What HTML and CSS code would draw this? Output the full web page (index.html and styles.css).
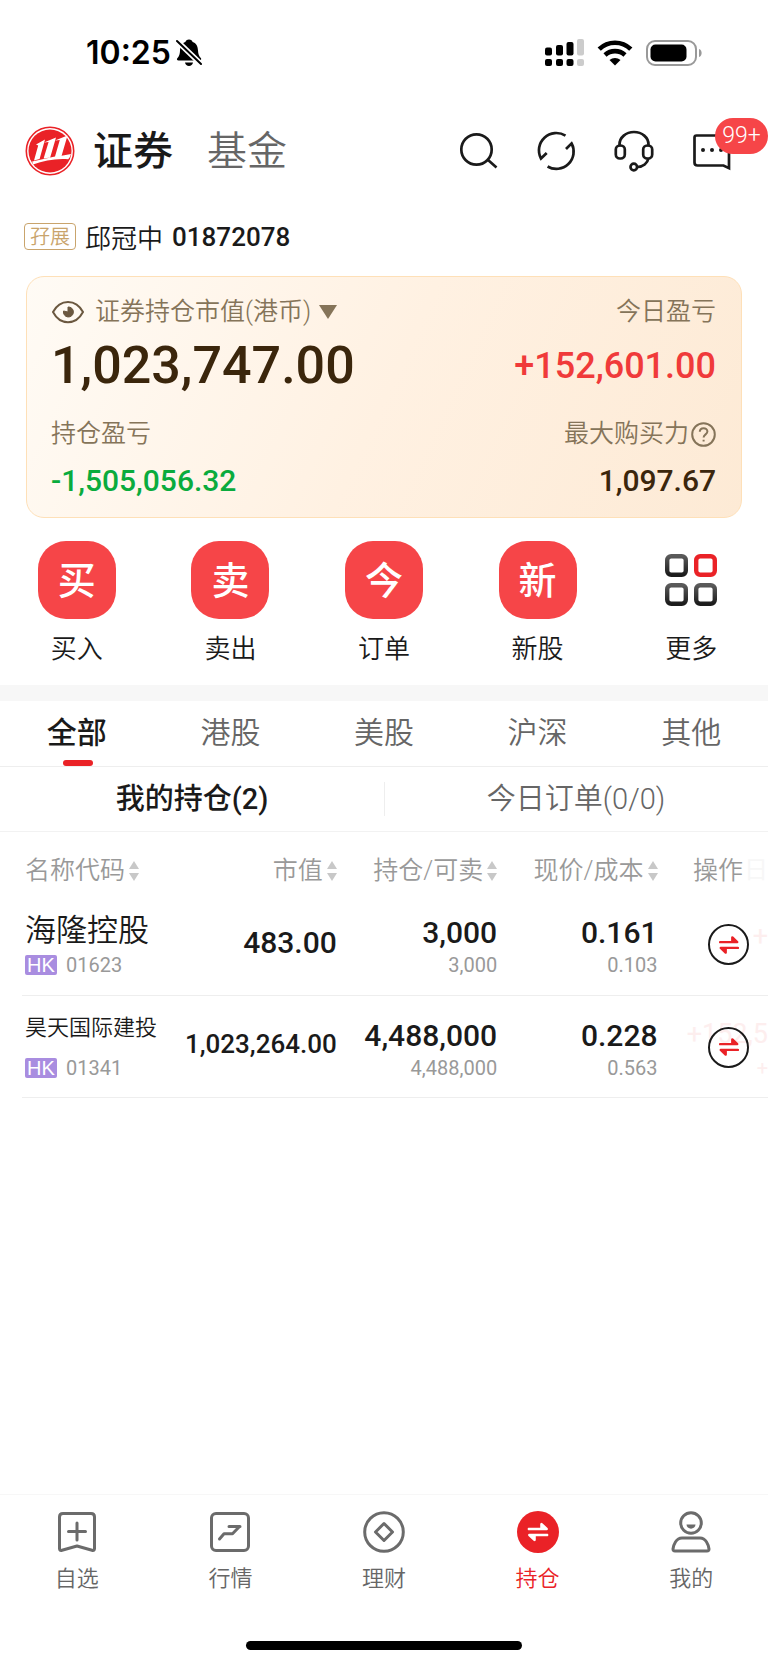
FILE: index.html
```html
<!DOCTYPE html>
<html lang="zh-CN">
<head>
<meta charset="utf-8">
<meta name="viewport" content="width=device-width, initial-scale=1">
<title>持仓</title>
<link rel="stylesheet" href="styles.css">
</head>
<body>
<svg class="defs" width="0" height="0" aria-hidden="true">
  <defs>
    <symbol id="swap" viewBox="0 0 18 18">
      <path d="M1 6.400H16.400L12 2.200V6.400M17 11.600H1.600L6 15.800V11.600" fill="none" stroke="currentColor" stroke-width="2.200" stroke-linecap="round" stroke-linejoin="round"/>
      <path d="M12 2.200V6.400H16.400ZM6 15.800V11.600H1.600Z" fill="currentColor" stroke="none"/>
    </symbol>
    <symbol id="sort" viewBox="0 0 10 20">
      <path d="M5 0L10 8H0ZM5 20L10 12H0Z" fill="currentColor"/>
    </symbol>
  </defs>
</svg>

<div class="status">
  <div class="status-left">
    <span class="time">10:25</span>
    <svg width="26" height="28" viewBox="0 0 26 28" aria-hidden="true">
      <path d="M13 0.500C15.200 0.500 16.200 1.800 16.600 2.900C20.600 4.300 21.800 7.500 22 11.500C22.200 15.500 23 17 25 19.200C25.500 20.300 25 21.500 23.500 21.500H2.500C1 21.500 0.500 20.300 1.300 19.200C3.300 17 3.800 15.500 4 11.500C4.200 7.500 5.600 4.300 9.400 2.900C9.800 1.800 10.800 0.500 13 0.500ZM9 23.500H17C16.600 25.800 15 27 13 27C11 27 9.400 25.800 9 23.500Z"/>
      <path d="M1 2L26 26" stroke="#fff" stroke-width="5.500"/>
      <path d="M1 2L25 25" stroke="#000" stroke-width="2" stroke-linecap="round"/>
    </svg>
  </div>
  <div class="status-right">
    <svg width="39" height="28" viewBox="0 0 39 28" aria-hidden="true">
      <rect x="0" y="8.500" width="7" height="8" rx="2"/><rect x="11" y="6" width="7" height="10.500" rx="2"/><rect x="21.500" y="3" width="7" height="13.500" rx="2"/><rect x="32" y="0" width="7" height="16.500" rx="2" fill="#ccc"/>
      <rect x="0" y="20" width="7" height="7" rx="2"/><rect x="11" y="20" width="7" height="7" rx="2"/><rect x="21.500" y="20" width="7" height="7" rx="2"/><rect x="32" y="20" width="7" height="7" rx="2" fill="#ccc"/>
    </svg>
    <svg class="wifi" width="36" height="26" viewBox="0 0 36 26" aria-hidden="true">
      <path d="M2.200 9.200C11 0.600 25 0.600 33.800 9.200M8 15C13.800 9.800 22.200 9.800 28 15" fill="none" stroke="#000" stroke-width="4.600"/>
      <path d="M18 25.500L12.500 20C15.600 17.300 20.400 17.300 23.500 20Z"/>
    </svg>
    <svg width="57" height="26" viewBox="0 0 57 26" aria-hidden="true">
      <rect x="1" y="1" width="49" height="24" rx="8" fill="none" stroke="#999" stroke-width="2"/>
      <rect x="4.500" y="4.500" width="36" height="17" rx="5"/>
      <path d="M53 9C56.500 10 56.500 16 53 17Z" fill="#999"/>
    </svg>
  </div>
</div>

<header class="header">
  <svg class="logo" width="50" height="50" viewBox="0 0 50 50" role="img" aria-label="招商证券">
    <circle cx="25" cy="25" r="23.700" fill="#fff" stroke="#ea2227" stroke-width="1.600"/>
    <circle cx="25" cy="25" r="21.500" fill="#ea2227"/>
    <path d="M11 18.500L20 13.500L14.600 33L9 34.500L13.200 19.500ZM19 16.500L31 11.500L25.200 31.500L18.600 32.500L23.600 16ZM30 14.500L42.500 9.500L36.600 29.800L46 28C44.800 31.500 44 32.500 43.200 33.200C31 32.200 19 34.500 8 38.500L7.200 35.500L30 30.500L34.800 14Z" fill="#fff"/>
  </svg>
  <nav class="modes">
    <button class="mode mode-on">证券</button>
    <button class="mode">基金</button>
  </nav>
  <div class="tools">
    <button class="tool" aria-label="搜索"><svg viewBox="0 0 42 42"><circle cx="19.500" cy="19.500" r="15.200"/><path d="M30.500 29.500L39.500 37.500"/></svg></button>
    <button class="tool" aria-label="刷新"><svg viewBox="0 0 42 42"><path d="M30.500 5.700A17.300 17.300 0 0 0 6 28.500L11.700 23M12.600 36.500A17.300 17.300 0 0 0 36.600 13.400L31 19"/></svg></button>
    <button class="tool" aria-label="客服"><svg viewBox="0 0 42 42"><path d="M6.500 16.500V14.500C6.500 7.500 13 2 21 2S35.500 7.500 35.500 14.500V16.500M35.500 28C34.500 33.500 30 37 24.500 37"/><rect x="2.800" y="15.500" width="9" height="13" rx="4"/><rect x="30.200" y="15.500" width="9" height="13" rx="4"/><circle cx="20.800" cy="37" r="3.300"/></svg></button>
    <button class="tool" aria-label="消息"><svg viewBox="0 0 42 42"><path d="M5.500 5.500H38V38.200L32.500 35.500H6.500Q3.500 35.500 3.500 32.500V7.500Q3.500 5.500 5.500 5.500Z"/><g fill="#1a1a1a" stroke="none"><circle cx="12" cy="20" r="2"/><circle cx="21" cy="20" r="2"/><circle cx="30" cy="20" r="2"/></g></svg><span class="badge">99+</span></button>
  </div>
</header>

<main>
  <div class="account"><span class="tag">孖展</span><span class="owner">邱冠中</span><span class="acct-no">01872078</span></div>

  <section class="card">
    <div class="card-row labels">
      <div class="card-title">
        <button class="eye" aria-label="隐藏金额"><svg width="34" height="24" viewBox="0 0 34 24"><path d="M2 12C9 -1.500 25 -1.500 32 12C25 25.500 9 25.500 2 12Z" fill="none" stroke="#6b5840" stroke-width="2"/><path d="M17 7V12L12.500 11A5 5 0 1 0 17 7Z" fill="#6b5840" stroke="#6b5840"/></svg></button>
        <button class="currency">证券持仓市值(港币)<svg width="20" height="14" viewBox="0 0 20 14"><path d="M1 0H19L10 14Z" fill="#857459"/></svg></button>
      </div>
      <span>今日盈亏</span>
    </div>
    <div class="card-row totals"><strong class="total">1,023,747.00</strong><span class="today">+152,601.00</span></div>
    <div class="card-row labels"><span>持仓盈亏</span>
      <button class="help">最大购买力<svg width="25" height="25" viewBox="0 0 25 25"><circle cx="12.500" cy="12.500" r="11.300"/><path d="M8.800 9.800C8.800 5 16.400 5 16.400 9.600C16.400 12.400 12.600 12.400 12.600 15.600M12.600 17.800V19.600"/></svg></button>
    </div>
    <div class="card-row amounts"><span class="loss">-1,505,056.32</span><span>1,097.67</span></div>
  </section>

  <nav class="actions">
    <button class="action"><span class="tile">买</span>买入</button>
    <button class="action"><span class="tile">卖</span>卖出</button>
    <button class="action"><span class="tile">今</span>订单</button>
    <button class="action"><span class="tile">新</span>新股</button>
    <button class="action"><svg width="78" height="78" viewBox="0 0 78 78" aria-hidden="true">
      <defs><linearGradient id="ink" x1="0" y1="0" x2="0" y2="1"><stop offset="0" stop-color="#5a5a5a"/><stop offset="1" stop-color="#1c1c1c"/></linearGradient></defs>
      <g fill="none" stroke="url(#ink)" stroke-width="4.400"><rect x="15.200" y="15.200" width="18.600" height="18.600" rx="4"/><rect x="44.200" y="15.200" width="18.600" height="18.600" rx="4" stroke="#ea2227"/><rect x="15.200" y="44.200" width="18.600" height="18.600" rx="4"/><rect x="44.200" y="44.200" width="18.600" height="18.600" rx="4"/></g>
    </svg>更多</button>
  </nav>

  <nav class="markets">
    <button class="market market-on">全部</button><button class="market">港股</button><button class="market">美股</button><button class="market">沪深</button><button class="market">其他</button>
  </nav>
  <div class="views">
    <button class="view view-on">我的持仓(2)</button>
    <button class="view">今日订单(0/0)</button>
  </div>

  <table class="holdings">
    <colgroup><col class="c-name"><col class="c-value"><col class="c-qty"><col class="c-price"><col></colgroup>
    <thead>
      <tr>
        <th><button class="sort">名称代码<svg><use href="#sort"/></svg></button></th>
        <th><button class="sort">市值<svg><use href="#sort"/></svg></button></th>
        <th><button class="sort">持仓/可卖<svg><use href="#sort"/></svg></button></th>
        <th><button class="sort">现价/成本<svg><use href="#sort"/></svg></button></th>
        <th class="op">操作<span class="under under-head">日</span></th>
      </tr>
    </thead>
    <tbody>
      <tr>
        <td><div class="name">海隆控股</div><div class="code"><span class="hk">HK</span>01623</div></td>
        <td class="value">483.00</td>
        <td><div class="num">3,000</div><div class="sub">3,000</div></td>
        <td><div class="num">0.161</div><div class="sub">0.103</div></td>
        <td class="op"><span class="under under-far">+</span><button class="trade" aria-label="交易"><svg width="20" height="20"><use href="#swap"/></svg></button></td>
      </tr>
      <tr>
        <td><div class="name name-long">昊天国际建投</div><div class="code"><span class="hk">HK</span>01341</div></td>
        <td class="value value-long">1,023,264.00</td>
        <td><div class="num">4,488,000</div><div class="sub">4,488,000</div></td>
        <td><div class="num">0.228</div><div class="sub">0.563</div></td>
        <td class="op"><span class="under under-gain">+152,5</span><span class="under under-rate">+</span><button class="trade" aria-label="交易"><svg width="20" height="20"><use href="#swap"/></svg></button></td>
      </tr>
    </tbody>
  </table>
</main>

<footer class="dock">
  <nav class="dock-nav">
    <a class="dock-item" href="#watch"><svg viewBox="0 0 42 42"><path d="M7 2.500H35Q38.500 2.500 38.500 6V37.500Q38.500 40 36 39.200L21 35L6 39.200Q3.500 40 3.500 37.500V6Q3.500 2.500 7 2.500ZM21 12V29M12.500 20.500H29.500"/></svg>自选</a>
    <a class="dock-item" href="#quotes"><svg viewBox="0 0 42 42"><rect x="2.500" y="2.500" width="37" height="37" rx="4.500"/><path d="M10.500 28L15 22.800H23.500L30.500 15.500M20 15.500H31"/></svg>行情</a>
    <a class="dock-item" href="#wealth"><svg viewBox="0 0 42 42"><circle cx="21" cy="21" r="19.300"/><path d="M21 12.500L29.500 21L21 29.500L12.500 21Z"/></svg>理财</a>
    <a class="dock-item dock-on" href="#holdings"><svg viewBox="0 0 42 42"><circle cx="21" cy="21" r="21" fill="#ea2227" stroke="none"/><use href="#swap" x="10.500" y="10.500" width="21" height="21" color="#fff"/></svg>持仓</a>
    <a class="dock-item" href="#me"><svg viewBox="0 0 42 42"><circle cx="21" cy="12" r="10.300"/><path d="M12 27H30C36 27 38.500 34 39 38Q39.200 40 37 40H5Q2.800 40 3 38C3.500 34 6 27 12 27Z"/><path d="M16.500 13.500H25.500C25.500 19 16.500 19 16.500 13.500Z" fill="#6b6b6b" stroke="none"/></svg>我的</a>
  </nav>
  <div class="home-bar"></div>
</footer>
</body>
</html>
```

FILE: styles.css
```css
* { box-sizing: border-box; }

body {
  margin: 0;
  min-height: 100vh;
  display: flex;
  flex-direction: column;
  overflow-x: hidden;
  background: #fff;
  color: #1a1a1a;
  font-family: Roboto, "Noto Sans CJK SC", sans-serif;
  font-weight: 350;
}

button {
  margin: 0;
  padding: 0;
  border: 0;
  background: none;
  color: inherit;
  font: inherit;
}

svg { flex: none; }
.defs { position: absolute; }

/* status bar */
.status {
  height: 105px;
  padding: 0 65px 0 86px;
  display: flex;
  justify-content: space-between;
  align-items: center;
  color: #000;
}
.status-left { display: flex; align-items: center; gap: 5px; }
.status-right { display: flex; align-items: center; gap: 13px; }
.time { font: 600 32px/40px Inter, sans-serif; }

/* header */
.header {
  height: 91px;
  padding: 0 35px 0 25px;
  display: flex;
  align-items: center;
}
.modes { display: flex; gap: 34px; margin-left: 18px; padding-top: 2px; }
.mode { font-size: 40px; line-height: 56px; color: #666; }
.mode-on { font-weight: 500; color: #1a1a1a; }
.tools { display: flex; gap: 36px; margin-left: auto; }
.tool { position: relative; width: 42px; height: 42px; }
.tool svg {
  display: block;
  width: 42px;
  height: 42px;
  fill: none;
  stroke: #1a1a1a;
  stroke-width: 2.7;
}
.badge {
  position: absolute;
  left: 24px;
  top: -12px;
  width: 53px;
  border-radius: 18px;
  background: #f64548;
  color: #fff;
  font-size: 23px;
  line-height: 36px;
  text-align: center;
}

/* account */
.account {
  height: 80px;
  padding: 0 24px;
  display: flex;
  align-items: center;
  font-size: 26px;
}
.tag {
  height: 27px;
  padding: 0 5px;
  border: 1px solid #c9a46c;
  border-radius: 4px;
  color: #c9a46c;
  font-size: 20px;
  line-height: 27px;
}
.owner { margin: 0 9px; }
.acct-no { padding-top: 2px; font-weight: 500; }

/* summary card */
.card {
  margin: 0 26px;
  padding: 19px 25px 18px 24px;
  border: 1px solid #fee0b8;
  border-radius: 18px;
  background: linear-gradient(115deg, #fffbf5 0%, #fff1e2 50%, #fdead5 100%);
  color: #3b260c;
}
.card-row { display: flex; justify-content: space-between; align-items: center; }
.labels { height: 32px; font-size: 25px; line-height: 32px; color: #857459; }
.card-title { display: flex; align-items: center; gap: 10px; }
.eye { display: flex; }
.currency { display: flex; align-items: center; gap: 7px; }
.totals { margin: 8px 0 22px; line-height: 60px; font-weight: 500; }
.total { font-size: 52px; font-weight: 500; }
.today { font-size: 36px; color: #f03a3a; }
.help { display: flex; align-items: center; gap: 2px; }
.help svg { fill: none; stroke: #857459; stroke-width: 2; }
.amounts { margin-top: 13px; font-size: 30px; line-height: 36px; font-weight: 500; }
.loss { color: #0aab3d; }

/* quick actions */
.actions {
  padding: 23px 0 19px;
  display: grid;
  grid-template-columns: repeat(5, 1fr);
  border-bottom: 16px solid #f7f7f7;
}
.action {
  display: flex;
  flex-direction: column;
  align-items: center;
  gap: 13px;
  font-size: 26px;
  line-height: 34px;
}
.tile {
  height: 78px;
  width: 78px;
  border-radius: 28px;
  background: #f64548;
  color: #fff;
  font-size: 38px;
  font-weight: 500;
  line-height: 80px;
}

/* tabs */
.markets {
  display: grid;
  grid-template-columns: repeat(5, 1fr);
  border-bottom: 1px solid #eee;
}
.market {
  position: relative;
  padding-bottom: 1px;
  font-size: 30px;
  line-height: 64px;
  color: #666;
}
.market-on { font-weight: 500; color: #1a1a1a; }
.market-on::after {
  content: "";
  position: absolute;
  left: 50%;
  bottom: 0;
  width: 30px;
  height: 6px;
  margin-left: -14px;
  border-radius: 3px;
  background: #ea2227;
}
.views {
  display: grid;
  grid-template-columns: 1fr 1fr;
  border-bottom: 1px solid #f2f2f2;
  background: linear-gradient(#eee, #eee) center / 1px 34px no-repeat;
}
.view { font-size: 29px; line-height: 64px; color: #666; }
.view-on { font-weight: 500; color: #1a1a1a; }

/* holdings */
.holdings {
  width: calc(100% - 22px);
  margin-left: 22px;
  border-collapse: collapse;
  table-layout: fixed;
}
.c-name { width: 20%; }
.c-value { width: 23%; }
.c-qty, .c-price { width: 21.5%; }
.holdings th {
  height: 61px;
  padding: 16px 6px 0;
  color: #999;
  font-size: 25px;
  font-weight: 350;
  line-height: 34px;
  text-align: right;
  white-space: nowrap;
}
.holdings td {
  height: 102px;
  padding: 18px 6px 0;
  border-bottom: 1px solid #eee;
  text-align: right;
  vertical-align: top;
}
.holdings th:first-child,
.holdings td:first-child { padding-left: 3px; padding-right: 0; text-align: left; }
.sort { display: inline-flex; align-items: center; gap: 4px; }
.sort svg { width: 10px; height: 20px; color: #c8c8c8; }
.name { height: 44px; font-size: 31px; line-height: 40px; white-space: nowrap; }
.name-long { font-size: 22px; line-height: 28px; }
.code { display: flex; align-items: center; gap: 9px; color: #999; font-size: 20px; line-height: 20px; font-weight: 400; }
.hk {
  width: 32px;
  border-radius: 2px;
  background: #a98de0;
  color: #fff;
  font-family: "Liberation Sans", sans-serif;
  text-align: center;
}
.holdings .value { font-size: 30px; line-height: 64px; font-weight: 500; }
.holdings .value-long { font-size: 26px; line-height: 60px; }
.num { font-size: 30px; line-height: 44px; font-weight: 500; }
.sub { font-size: 20px; line-height: 20px; color: #999; font-weight: 400; }
.op { position: relative; }
.holdings th.op { padding-right: 25px; }
.holdings td.op { padding: 31px 19px 0 0; }
.trade {
  position: relative;
  display: inline-flex;
  align-items: center;
  justify-content: center;
  width: 41px;
  height: 41px;
  border: 2px solid #1a1a1a;
  border-radius: 50%;
  color: #ea2227;
}
.under { position: absolute; color: #fdeeee; font-size: 27px; line-height: 32px; font-weight: 400; }
.under-head { right: 0; color: #f7f7f7; font-size: 24px; }
.under-far { right: 0; top: 27px; }
.under-gain { right: 0; top: 22px; }
.under-rate { right: 0; top: 56px; font-size: 20px; }

/* bottom bar */
.dock { margin-top: auto; padding-bottom: 15px; border-top: 1px solid #f7f7f7; }
.dock-nav { display: grid; grid-template-columns: repeat(5, 1fr); padding: 16px 0 48px; }
.dock-item {
  display: flex;
  flex-direction: column;
  align-items: center;
  gap: 12px;
  color: #666;
  font-size: 22px;
  line-height: 28px;
  text-decoration: none;
}
.dock-item svg { width: 42px; height: 42px; fill: none; stroke: #6b6b6b; stroke-width: 3; stroke-linecap: round; stroke-linejoin: round; }
.dock-item.dock-on { color: #ea2227; }
.home-bar { width: 36%; height: 9px; margin: 0 auto; border-radius: 5px; background: #000; }
```
